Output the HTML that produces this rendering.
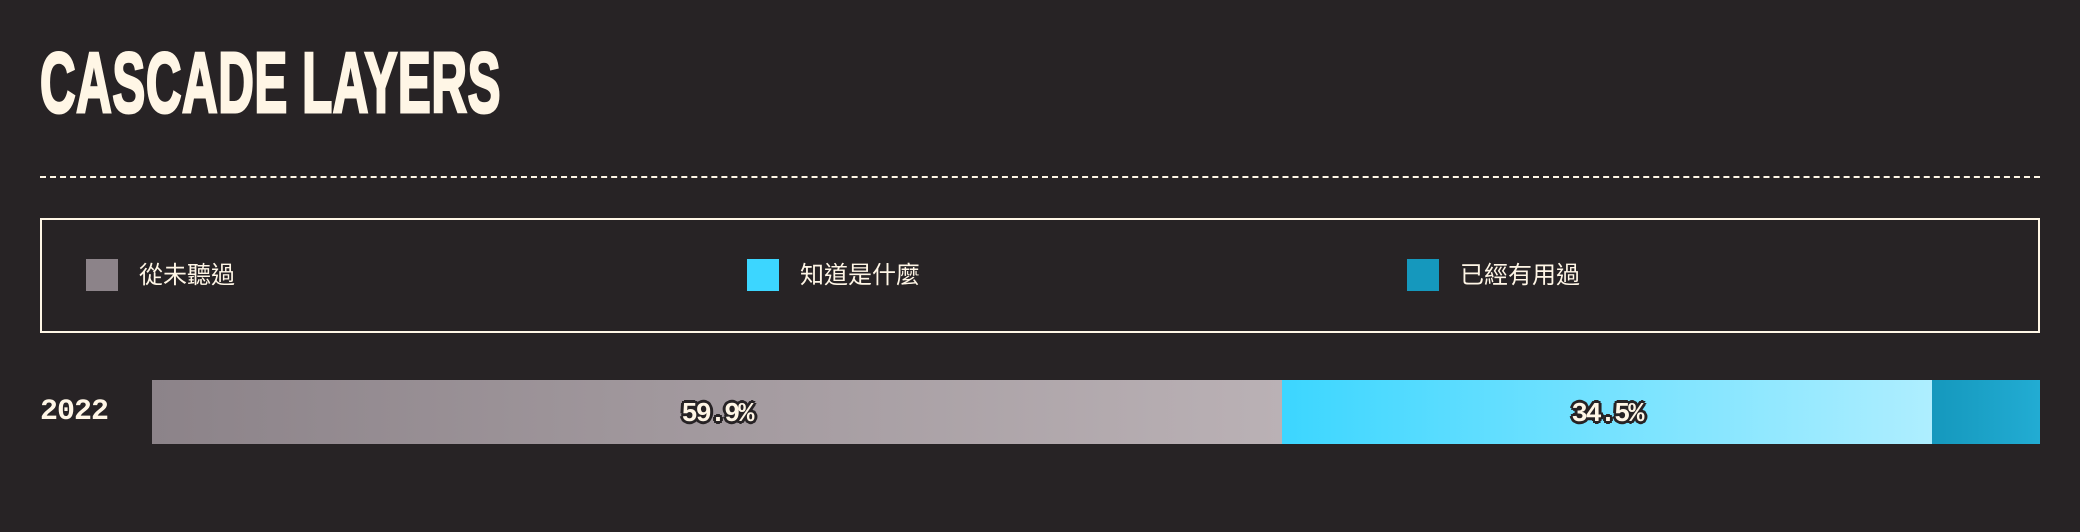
<!DOCTYPE html>
<html><head><meta charset="utf-8"><style>
html,body{margin:0;padding:0;background:#272325;width:2080px;height:532px;overflow:hidden}
body{position:relative;font-family:"Liberation Sans","Noto Sans CJK TC",sans-serif;color:#fff6e6}
.title{position:absolute;left:40px;top:36px;font-size:85px;font-weight:bold;line-height:95px;white-space:nowrap;transform:scaleX(0.58);transform-origin:left top;letter-spacing:1px;-webkit-text-stroke:3px #fff6e6}
.dash{position:absolute;left:40px;top:176px;width:2000px;border-top:2px dashed #fff6e6}
.box{position:absolute;left:40px;top:218px;width:1996px;height:111px;border:2px solid #fff6e6}
.sw{position:absolute;top:259px;width:32px;height:32px}
.lt{position:absolute;top:260px;font-size:24px;line-height:32px}
.year{position:absolute;left:40px;top:396px;font-family:"Liberation Mono",monospace;font-weight:bold;font-size:30px;line-height:32px;letter-spacing:-1px}
.bar{position:absolute;top:380px;height:64px}
.pct{position:absolute;top:3px;height:64px;line-height:64px;width:100%;text-align:center;font-family:"Liberation Mono",monospace;font-weight:bold;font-size:27px;letter-spacing:-2px;color:#fff6e6;
text-shadow:2px 0 #272325,-2px 0 #272325,0 2px #272325,0 -2px #272325,2px 2px #272325,-2px -2px #272325,2px -2px #272325,-2px 2px #272325,3px 0 #272325,-3px 0 #272325,0 3px #272325,0 -3px #272325}
</style></head><body>
<div class="title">CASCADE LAYERS</div>
<div class="dash"></div>
<div class="box"></div>
<div class="sw" style="left:86px;background:#8c8389"></div><div class="lt" style="left:139px">從未聽過</div>
<div class="sw" style="left:747px;background:#3cd6ff"></div><div class="lt" style="left:800px">知道是什麼</div>
<div class="sw" style="left:1407px;background:#1598bd"></div><div class="lt" style="left:1460px">已經有用過</div>
<div class="year">2022</div>
<div class="bar" style="left:152px;width:1130px;background:linear-gradient(90deg,#8c8389,#bab1b5)"><div class="pct">59.9%</div></div>
<div class="bar" style="left:1282px;width:650px;background:linear-gradient(90deg,#3cd6ff,#aeeeff)"><div class="pct">34.5%</div></div>
<div class="bar" style="left:1932px;width:108px;background:linear-gradient(90deg,#1598bd,#22acd3)"></div>
</body></html>
